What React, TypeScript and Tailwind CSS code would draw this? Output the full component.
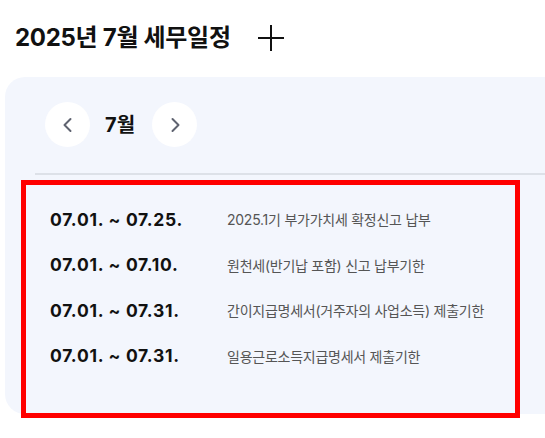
import React from 'react';

const schedules = [
  { period: '07.01. ~ 07.25.', title: '2025.1기 부가가치세 확정신고 납부' },
  { period: '07.01. ~ 07.10.', title: '원천세(반기납 포함) 신고 납부기한' },
  { period: '07.01. ~ 07.31.', title: '간이지급명세서(거주자의 사업소득) 제출기한' },
  { period: '07.01. ~ 07.31.', title: '일용근로소득지급명세서 제출기한' },
];

const font = "font-['Inter','Noto_Sans_CJK_KR',sans-serif]";

export default function App() {
  return (
    <div className={`w-[545px] h-[438px] overflow-hidden bg-white ${font}`}>
      {/* Header */}
      <div className="flex items-center h-[77px] pl-[15px] pb-[2px]">
        <h2 className="text-[24px] font-bold text-[#111] tracking-[-0.3px]">2025년 7월 세무일정</h2>
        <button className="ml-[26px] w-[28px] h-[28px] flex items-center justify-center">
          <svg width="28" height="28" viewBox="0 0 28 28" fill="none" stroke="#111" strokeWidth="2">
            <path d="M14 1v26M1 14h26" />
          </svg>
        </button>
      </div>

      {/* Panel */}
      <div className="ml-[5px] h-[337px] bg-[#f3f6fd] rounded-l-[20px] pt-[25px]">
        <div className="flex items-center ml-[40px] gap-[15px]">
          <button className="w-[45px] h-[45px] rounded-full bg-white flex items-center justify-center">
            <svg width="14" height="16" viewBox="0 0 14 16" fill="none" stroke="#5f6370" strokeWidth="2" strokeLinecap="round" strokeLinejoin="round">
              <path d="M9.5 2 3.5 8l6 6" />
            </svg>
          </button>
          <span className="text-[20px] font-bold text-[#111] w-[32px]">7월</span>
          <button className="w-[45px] h-[45px] rounded-full bg-white flex items-center justify-center">
            <svg width="14" height="16" viewBox="0 0 14 16" fill="none" stroke="#5f6370" strokeWidth="2" strokeLinecap="round" strokeLinejoin="round">
              <path d="M4.5 2l6 6-6 6" />
            </svg>
          </button>
        </div>

        <div className="ml-[30px] mt-[26px] h-[2px] bg-[#dde1e8]" />

        <div className="ml-[16px] w-[499px] h-[238px] mt-[5px] border-[5px] border-[#ff0000] pt-[12px] pl-[24px]">
          {schedules.map((s, i) => (
            <div key={i} className="flex items-center h-[45.5px]">
              <span className="w-[177px] text-[17.5px] font-bold text-[#111] tracking-[0.7px]">{s.period}</span>
              <span className="text-[14px] text-[#555] tracking-[-0.25px]">{s.title}</span>
            </div>
          ))}
        </div>
      </div>
    </div>
  );
}
